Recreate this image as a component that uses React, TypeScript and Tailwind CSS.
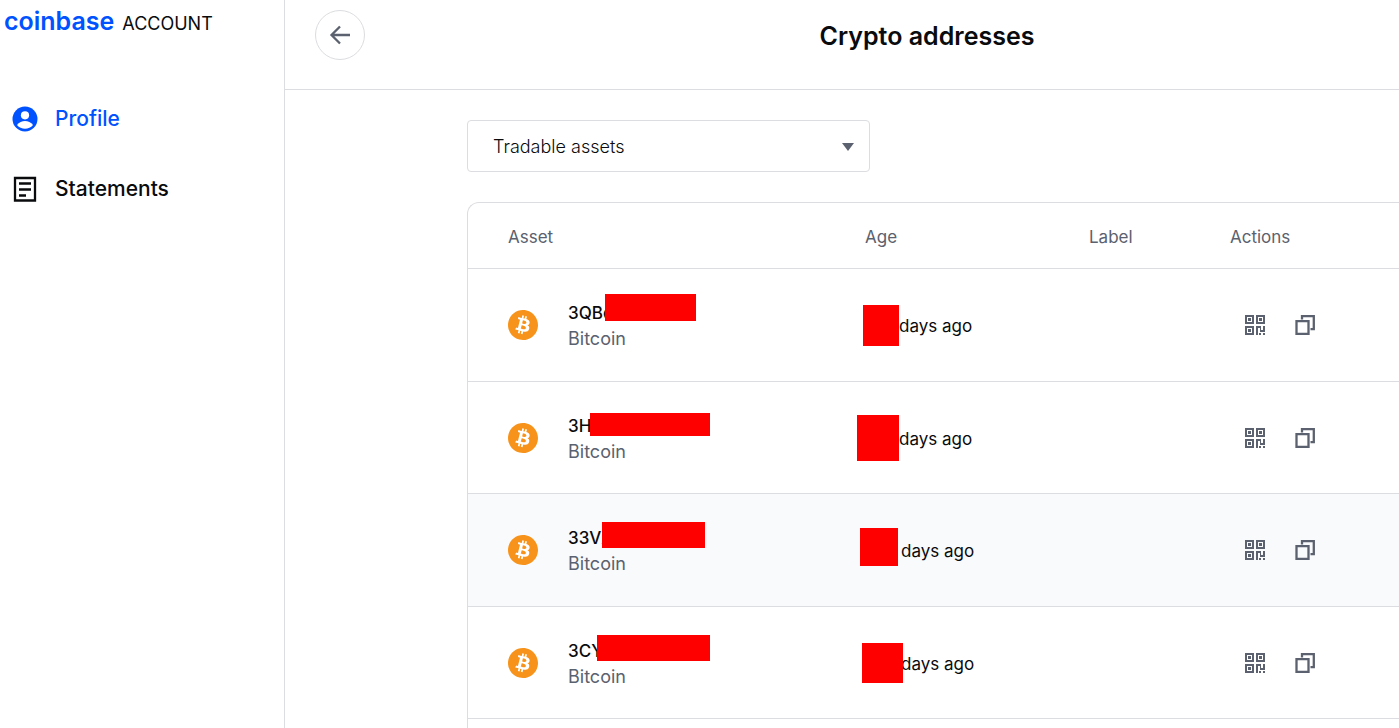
import React from 'react';
import { SiBitcoin } from 'react-icons/si';

interface AddressRow {
  id: string;
  address: string;
  // Position and size of the blocks that cover private values
  addressMask: string;
  ageMask: string;
  agePadding: string;
  highlighted?: boolean;
}

const rows: AddressRow[] = [
  {
    id: 'a',
    address: '3QBc',
    addressMask: 'left-[137px] top-[25px] w-[91px] h-[27px]',
    ageMask: 'left-[38px] top-9 w-9 h-[41px]',
    agePadding: 'pl-[74px]',
  },
  {
    id: 'b',
    address: '3H',
    addressMask: 'left-[122px] top-[31px] w-[120px] h-[23px]',
    ageMask: 'left-8 top-[33px] w-[42px] h-[46px]',
    agePadding: 'pl-[74px]',
  },
  {
    id: 'c',
    address: '33VX',
    addressMask: 'left-[134px] top-7 w-[103px] h-[26px]',
    ageMask: 'left-[35px] top-[34px] w-[38px] h-[38px]',
    agePadding: 'pl-[76px]',
    highlighted: true,
  },
  {
    id: 'd',
    address: '3CY',
    addressMask: 'left-[129px] top-7 w-[113px] h-[26px]',
    ageMask: 'left-[37px] top-9 w-[41px] h-10',
    agePadding: 'pl-[76px]',
  },
];

const ProfileIcon: React.FC = () => (
  <svg width="26" height="26" viewBox="0 0 26 26" aria-hidden="true">
    <circle cx="13" cy="13" r="12.5" fill="#0052ff" />
    <circle cx="13" cy="9.3" r="4.1" fill="#fff" />
    <path d="M5 19C7 16.2 10 15 13 15s6 1.200 8 4c-2 2.500-5 3.700-8 3.700S7 21.500 5 19z" fill="#fff" />
  </svg>
);

const StatementsIcon: React.FC = () => (
  <svg width="26" height="26" viewBox="0 0 26 26" fill="none" stroke="#0a0b0d" strokeWidth="2.3" aria-hidden="true">
    <path d="M3 2h20v22.500H3zM7 7.500h12M7 13.500h12M7 19.500h7" />
  </svg>
);

const ArrowLeftIcon: React.FC = () => (
  <svg width="22" height="22" viewBox="0 0 22 22" fill="none" stroke="#5b616e" strokeWidth="2.3" aria-hidden="true">
    <path d="M21 11H3M11 2.500L2.500 11l8.500 8.500" />
  </svg>
);

const QrIcon: React.FC = () => (
  <svg width="20" height="20" viewBox="0 0 20 20" fill="#5b616e" aria-hidden="true">
    <path fillRule="evenodd" d="M0 0h9v9H0zM2 2v5h5V2zM11 0h9v9h-9zM13 2v5h5V2zM0 11h9v9H0zM2 13v5h5v-5z" />
    <path d="M3 3h3v3H3zM14 3h3v3h-3zM3 14h3v3H3zM11 11h5v4h2v-4h2v6h-5v-4h-2v7h-2zM14 18h2v2h-2zM18 18h2v2h-2z" />
  </svg>
);

const CopyIcon: React.FC = () => (
  <svg width="20" height="20" viewBox="0 0 20 20" fill="none" stroke="#5b616e" strokeWidth="2.3" aria-hidden="true">
    <path d="M1.500 6.200h12v12.600h-12zM7 4.500V1.200h11.800v13H15.500" />
  </svg>
);

const Sidebar: React.FC = () => (
  <aside className="flex w-[285px] shrink-0 flex-col border-r border-[#dcdde0]">
    <a href="#home" className="flex h-[84px] items-baseline gap-2 pl-1">
      <span className="text-[25px] leading-[42px] font-semibold text-[#0052ff]">coinbase</span>
      <span className="text-[18px]">ACCOUNT</span>
    </a>
    <nav className="flex flex-col text-[21px] font-medium">
      <a href="#profile" className="flex h-[70px] items-center gap-[17px] pl-3 text-[#0052ff]">
        <ProfileIcon />
        Profile
      </a>
      <a href="#statements" className="flex h-[70px] items-center gap-[17px] pl-3">
        <StatementsIcon />
        Statements
      </a>
    </nav>
  </aside>
);

const AddressTable: React.FC = () => (
  <div className="flex-1 overflow-hidden rounded-tl-xl border-t border-l border-[#dcdde0]">
    <table className="w-full table-fixed border-separate border-spacing-0 text-[17px]">
      <thead>
        <tr className="h-[66px] text-left text-[#5b616e]">
          <th className="w-[357px] border-b border-[#dcdde0] pt-1 pl-10 font-normal">Asset</th>
          <th className="w-[224px] border-b border-[#dcdde0] pt-1 pl-10 font-normal">Age</th>
          <th className="w-[141px] border-b border-[#dcdde0] pt-1 pl-10 font-normal">Label</th>
          <th className="border-b border-[#dcdde0] pt-1 pl-10 font-normal">Actions</th>
        </tr>
      </thead>
      <tbody>
        {rows.map((row) => (
          <tr
            key={row.id}
            className={`odd:h-[113px] even:h-[112px] ${row.highlighted ? 'bg-[#f9fafc]' : ''}`}
          >
            <td className="relative border-b border-[#dcdde0] p-0 pl-10">
              <div className="flex items-center gap-[30px]">
                <span className="rounded-full bg-white">
                  <SiBitcoin className="size-[30px] text-[#f7931a]" />
                </span>
                <div className="flex flex-col pt-0.5 leading-[25px]">
                  <span className="font-medium">{row.address}</span>
                  <span className="text-[18px] text-[#5b616e]">Bitcoin</span>
                </div>
              </div>
              <span className={`absolute bg-[#ff0000] ${row.addressMask}`} />
            </td>
            <td className={`relative border-b border-[#dcdde0] pt-1 ${row.agePadding}`}>
              days ago
              <span className={`absolute bg-[#ff0000] ${row.ageMask}`} />
            </td>
            <td className="border-b border-[#dcdde0] p-0" />
            <td className="border-b border-[#dcdde0] p-0 pl-[55px]">
              <div className="flex items-center gap-[30px]">
                <button type="button" aria-label="Show QR code">
                  <QrIcon />
                </button>
                <button type="button" aria-label="Copy address">
                  <CopyIcon />
                </button>
              </div>
            </td>
          </tr>
        ))}
      </tbody>
    </table>
  </div>
);

export default function App() {
  return (
    <div className="flex min-h-screen bg-white font-['Inter','Liberation_Sans',sans-serif] text-[#0a0b0d]">
      <Sidebar />
      <main className="flex min-w-0 flex-1 flex-col">
        <header className="flex h-[90px] border-b border-[#dcdde0] pt-[10px] pl-[30px]">
          <button
            type="button"
            aria-label="Back"
            className="flex size-[50px] shrink-0 items-center justify-center rounded-full border border-[#dcdde0]"
          >
            <ArrowLeftIcon />
          </button>
          <h1 className="flex-1 pl-[90px] text-center text-[25px] leading-[52px] font-semibold">
            Crypto addresses
          </h1>
        </header>

        <div className="flex flex-1 flex-col gap-[30px] pt-[30px] pl-[182px]">
          <div className="relative w-[403px]">
            <select
              aria-label="Asset type"
              defaultValue="tradable"
              className="h-[52px] w-full appearance-none rounded border border-[#dcdde0] bg-white px-[25px] text-[18px] font-light"
            >
              <option value="tradable">Tradable assets</option>
            </select>
            <svg
              width="12"
              height="8"
              viewBox="0 0 12 8"
              className="pointer-events-none absolute top-[23px] right-4"
              aria-hidden="true"
            >
              <path d="M0 0h12L6 8z" fill="#5b616e" />
            </svg>
          </div>
          <AddressTable />
        </div>
      </main>
    </div>
  );
}
